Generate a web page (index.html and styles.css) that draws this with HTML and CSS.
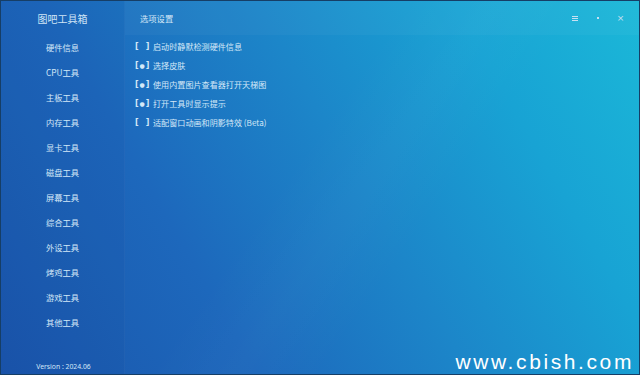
FILE: index.html
```html
<!DOCTYPE html>
<html lang="zh">
<head>
<meta charset="utf-8">
<link rel="stylesheet" href="styles.css">
</head>
<body>
<div class="app">
  <aside class="sidebar">
    <div class="logo">图吧工具箱</div>
    <nav class="nav">
      <div class="nav-item">硬件信息</div>
      <div class="nav-item">CPU工具</div>
      <div class="nav-item">主板工具</div>
      <div class="nav-item">内存工具</div>
      <div class="nav-item">显卡工具</div>
      <div class="nav-item">磁盘工具</div>
      <div class="nav-item">屏幕工具</div>
      <div class="nav-item">综合工具</div>
      <div class="nav-item">外设工具</div>
      <div class="nav-item">烤鸡工具</div>
      <div class="nav-item">游戏工具</div>
      <div class="nav-item">其他工具</div>
    </nav>
    <div class="version">Version : 2024.06</div>
  </aside>
  <main class="main">
    <header class="header">
      <div class="title">选项设置</div>
      <div class="controls">
        <span class="ctl ctl-menu"><i></i><i></i><i></i></span>
        <span class="ctl ctl-min"><i></i></span>
        <span class="ctl ctl-close">×</span>
      </div>
    </header>
    <div class="options">
      <div class="opt"><span class="box">[<span class="mark"></span>]</span><span>启动时静默检测硬件信息</span></div>
      <div class="opt"><span class="box">[<span class="mark">●</span>]</span><span>选择皮肤</span></div>
      <div class="opt"><span class="box">[<span class="mark">●</span>]</span><span>使用内置图片查看器打开天梯图</span></div>
      <div class="opt"><span class="box">[<span class="mark">●</span>]</span><span>打开工具时显示提示</span></div>
      <div class="opt"><span class="box">[<span class="mark"></span>]</span><span>适配窗口动画和阴影特效 (Beta)</span></div>
    </div>
    <div class="watermark">www.cbish.com</div>
  </main>
</div>
</body>
</html>
```
FILE: styles.css
```css
* { box-sizing: border-box; }
html, body { margin: 0; padding: 0; }
body {
  width: 640px;
  height: 375px;
  overflow: hidden;
  font-family: "Noto Sans CJK SC", "Noto Sans", sans-serif;
}
.app {
  width: 640px;
  height: 375px;
  border: 1px solid #163e66;
  display: flex;
  background:
    linear-gradient(125deg, rgba(255,255,255,0) 45%, rgba(255,255,255,0.02) 55%, rgba(255,255,255,0) 65%),
    linear-gradient(60deg, #1a55ab 0%, #1d68bc 30%, #1c86c9 55%, #18a3d4 78%, #1bb8d8 100%);
  color: #d6eaf8;
}
.sidebar {
  width: 124px;
  display: flex;
  flex-direction: column;
  background: rgba(10, 40, 120, 0.05);
  border-right: 1px solid rgba(255,255,255,0.03);
}
.logo {
  height: 34px;
  display: flex;
  align-items: center;
  justify-content: center;
  font-size: 10px;
  color: #cfe4f6;
  padding-top: 1px;
}
.nav { display: flex; flex-direction: column; margin-top: -1px; }
.nav-item {
  height: 25px;
  display: flex;
  align-items: center;
  justify-content: center;
  font-size: 8.3px;
  color: #d4e8f8;
}
.version {
  margin-top: auto;
  padding-bottom: 3px;
  text-align: center;
  font-family: "Noto Sans", sans-serif;
  font-size: 6.8px;
  color: #d4e8f8;
  padding-left: 2px;
}
.main {
  flex: 1;
  display: flex;
  flex-direction: column;
  position: relative;
}
.header {
  height: 34px;
  display: flex;
  align-items: center;
  justify-content: space-between;
  padding-left: 15px;
  background: rgba(255,255,255,0.03);
}
.title { font-size: 8.3px; color: #d4e8f8; }
.controls {
  display: flex;
  align-items: center;
  padding-right: 7px;
}
.ctl {
  width: 23px;
  height: 12px;
  display: flex;
  align-items: center;
  justify-content: center;
  color: #c8e0f2;
}
.ctl-menu { flex-direction: column; gap: 1px; }
.ctl-menu i { display: block; width: 6px; height: 1px; background: #c8e0f2; }
.ctl-min i { display: block; width: 2px; height: 2px; background: #c8e0f2; }
.ctl-close { font-family: "DejaVu Sans", sans-serif; font-size: 9px; line-height: 1; }
.options {
  padding-top: 2px;
  padding-left: 10px;
  display: flex;
  flex-direction: column;
}
.opt {
  height: 19px;
  display: flex;
  align-items: center;
  font-size: 8.1px;
  color: #d4e8f8;
}
.box {
  display: inline-flex;
  align-items: center;
  width: 18px;
  font-family: "DejaVu Sans", sans-serif;
  font-weight: bold;
  font-size: 8px;
}
.mark {
  display: inline-block;
  width: 7px;
  text-align: center;
  font-size: 6px;
}
.watermark {
  position: absolute;
  right: 5px;
  bottom: 0;
  font-family: "Liberation Sans", sans-serif;
  font-size: 21px;
  letter-spacing: 2.6px;
  color: #ffffff;
  line-height: 24px;
}
```
